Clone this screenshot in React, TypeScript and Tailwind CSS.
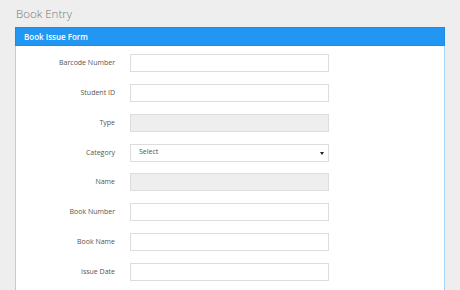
import React from "react";

const rows: { label: string; kind: "text" | "disabled" | "select" }[] = [
  { label: "Barcode Number", kind: "text" },
  { label: "Student ID", kind: "text" },
  { label: "Type", kind: "disabled" },
  { label: "Category", kind: "select" },
  { label: "Name", kind: "disabled" },
  { label: "Book Number", kind: "text" },
  { label: "Book Name", kind: "text" },
  { label: "Issue Date", kind: "text" },
];

export default function App() {
  return (
    <div
      className="w-[460px] h-[290px] overflow-hidden bg-[#eeeeee]"
      style={{ fontFamily: '"Open Sans", sans-serif' }}
    >
      <div className="pl-[16px] pt-[6px] h-[27px] text-[11.5px] font-light leading-[16px] text-[#777777]">
        Book Entry
      </div>
      <div className="ml-[15px] w-[430px] h-[300px] bg-white border border-[#a8d2f7]">
        <div className="h-[19px] -mt-px -mx-px bg-[#2196f3] border border-[#1a8cec] px-[8px] text-[8px] font-semibold leading-[17px] text-white">
          Book Issue Form
        </div>
        <div className="flex flex-col gap-[11.85px] pt-[8px]">
          {rows.map((r) => (
            <div key={r.label} className="flex items-center h-[18px]">
              <div className="w-[99px] text-right text-[7px] text-[#555555] leading-[18px]">
                {r.label}
              </div>
              <div
                className={`ml-[15px] w-[199px] h-[18px] border border-[#dddddd] relative flex items-center ${
                  r.kind === "disabled" ? "bg-[#eeeeee]" : "bg-white"
                }`}
              >
                {r.kind === "select" && (
                  <>
                    <span className="pl-[8px] text-[7px] text-[#555555]">Select</span>
                    <svg
                      className="absolute right-[4px] top-[7px]"
                      width="4"
                      height="3"
                      viewBox="0 0 4 3"
                    >
                      <path d="M0 0 H4 L2 3 Z" fill="#222" />
                    </svg>
                  </>
                )}
              </div>
            </div>
          ))}
        </div>
      </div>
    </div>
  );
}
